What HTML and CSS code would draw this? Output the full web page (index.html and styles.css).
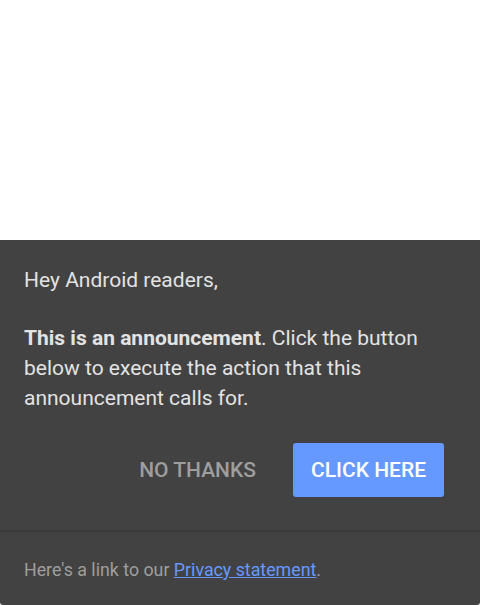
FILE: index.html
```html
<!DOCTYPE html>
<html>
<head>
<meta charset="utf-8">
<link rel="stylesheet" href="styles.css">
</head>
<body>
<div class="spacer"></div>
<div class="sheet">
  <div class="main">
    <p class="greet">Hey Android readers,</p>
    <p class="msg"><strong>This is an announcement</strong>. Click the button below to execute the action that this announcement calls for.</p>
    <div class="actions">
      <button class="btn btn-text">NO THANKS</button>
      <button class="btn btn-primary">CLICK HERE</button>
    </div>
  </div>
  <div class="footer">Here's a link to our <a href="#">Privacy statement</a>.</div>
</div>
</body>
</html>
```
FILE: styles.css
```css
html, body {
  margin: 0;
  padding: 0;
  background: #ffffff;
  font-family: Roboto, "Noto Sans", sans-serif;
}
.spacer {
  height: 240px;
}
.sheet {
  background: #424242;
  height: 365px;
  border-radius: 0 0 3px 3px;
  display: flex;
  flex-direction: column;
}
.main {
  padding: 25px 24px 0 24px;
  border-bottom: 2px solid #3a3a3a;
  height: 292px;
  box-sizing: border-box;
}
.greet, .msg {
  margin: 0;
  color: #e3e3e3;
  font-size: 21px;
  line-height: 30px;
}
.msg {
  margin-top: 28px;
}
.msg strong {
  font-weight: 700;
}
.actions {
  display: flex;
  justify-content: flex-end;
  align-items: center;
  gap: 37px;
  margin-top: 30px;
  margin-right: 12px;
}
.btn {
  font-family: Roboto, "Noto Sans", sans-serif;
  font-size: 21px;
  font-weight: 500;
  border: none;
  background: none;
  padding: 0;
  cursor: pointer;
}
.btn-text {
  color: #9e9e9e;
}
.btn-primary {
  background: #6699ff;
  color: #ffffff;
  width: 151px;
  height: 54px;
  border-radius: 3px;
}
.footer {
  padding: 25px 24px 0 24px;
  color: #9e9e9e;
  font-size: 17.8px;
  line-height: 26px;
}
.footer a {
  color: #6699ff;
  text-decoration: underline;
}
```
